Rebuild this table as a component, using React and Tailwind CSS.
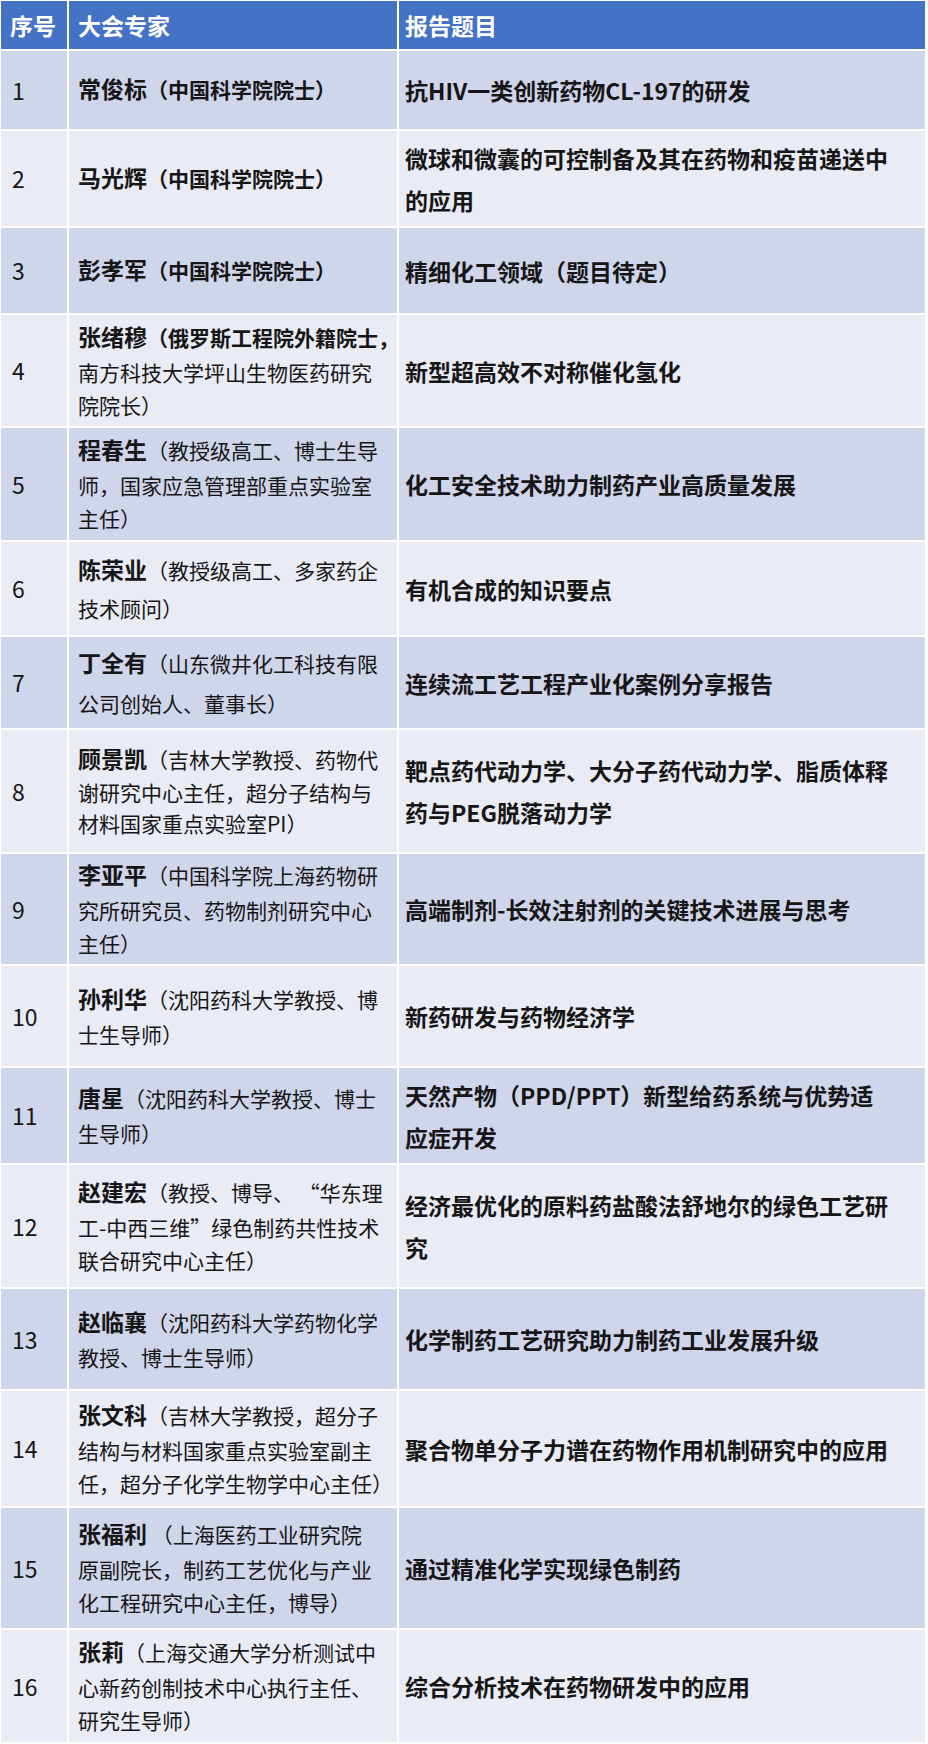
import React from "react";

const rows = [
  { n: "1", h: "h-[78px]", name: "常俊标", first: "（中国科学院院士）", firstBold: true, more: [], title: ["抗HIV一类创新药物CL-197的研发"] },
  { n: "2", h: "h-[95px]", name: "马光辉", first: "（中国科学院院士）", firstBold: true, more: [], title: ["微球和微囊的可控制备及其在药物和疫苗递送中", "的应用"] },
  { n: "3", h: "h-[85px]", name: "彭孝军", first: "（中国科学院院士）", firstBold: true, more: [], title: ["精细化工领域（题目待定）"] },
  { n: "4", h: "h-[111px]", name: "张绪穆", first: "（俄罗斯工程院外籍院士，", firstBold: true, more: ["南方科技大学坪山生物医药研究", "院院长）"], title: ["新型超高效不对称催化氢化"] },
  { n: "5", h: "h-[112px]", name: "程春生", first: "（教授级高工、博士生导", more: ["师，国家应急管理部重点实验室", "主任）"], title: ["化工安全技术助力制药产业高质量发展"] },
  { n: "6", h: "h-[93px]", lead: "leading-[36px]", name: "陈荣业", first: "（教授级高工、多家药企", more: ["技术顾问）"], title: ["有机合成的知识要点"] },
  { n: "7", h: "h-[91px]", lead: "leading-[38px]", name: "丁全有", first: "（山东微井化工科技有限", more: ["公司创始人、董事长）"], title: ["连续流工艺工程产业化案例分享报告"] },
  { n: "8", h: "h-[122px]", lead: "leading-[31px]", name: "顾景凯", first: "（吉林大学教授、药物代", more: ["谢研究中心主任，超分子结构与", "材料国家重点实验室PI）"], title: ["靶点药代动力学、大分子药代动力学、脂质体释", "药与PEG脱落动力学"] },
  { n: "9", h: "h-[110px]", name: "李亚平", first: "（中国科学院上海药物研", more: ["究所研究员、药物制剂研究中心", "主任）"], title: ["高端制剂-长效注射剂的关键技术进展与思考"] },
  { n: "10", h: "h-[100px]", name: "孙利华", first: "（沈阳药科大学教授、博", more: ["士生导师）"], title: ["新药研发与药物经济学"] },
  { n: "11", h: "h-[95px]", name: "唐星", first: "（沈阳药科大学教授、博士", more: ["生导师）"], title: ["天然产物（PPD/PPT）新型给药系统与优势适", "应症开发"] },
  { n: "12", h: "h-[122px]", name: "赵建宏", first: "（教授、博导、 “华东理", more: ["工-中西三维”绿色制药共性技术", "联合研究中心主任）"], title: ["经济最优化的原料药盐酸法舒地尔的绿色工艺研", "究"] },
  { n: "13", h: "h-[100px]", name: "赵临襄", first: "（沈阳药科大学药物化学", more: ["教授、博士生导师）"], title: ["化学制药工艺研究助力制药工业发展升级"] },
  { n: "14", h: "h-[115px]", name: "张文科", first: "（吉林大学教授，超分子", more: ["结构与材料国家重点实验室副主", "任，超分子化学生物学中心主任）"], title: ["聚合物单分子力谱在药物作用机制研究中的应用"] },
  { n: "15", h: "h-[120px]", name: "张福利", first: " （上海医药工业研究院", more: ["原副院长，制药工艺优化与产业", "化工程研究中心主任，博导）"], title: ["通过精准化学实现绿色制药"] },
  { n: "16", h: "h-[112px]", name: "张莉", first: "（上海交通大学分析测试中", more: ["心新药创制技术中心执行主任、", "研究生导师）"], title: ["综合分析技术在药物研发中的应用"] },
];

function Row({ row, dark }) {
  const bg = dark ? "bg-[#cfd5ea]" : "bg-[#e9ebf5]";
  return (
    <>
      <div className={`${row.h} ${bg} flex items-center pl-[11px] text-[23px]`}>{row.n}</div>
      <div className={`${row.h} ${bg} flex flex-col justify-center pl-[9px] ${row.lead || "leading-[33px]"}`}>
        <div className="whitespace-pre">
          <span className="text-[23px] font-bold">{row.name}</span>
          <span className={`text-[21px] ${row.firstBold ? "font-bold" : "font-normal"}`}>{row.first}</span>
        </div>
        {row.more.map((line) => (
          <div key={line} className="whitespace-pre text-[21px]">
            {line}
          </div>
        ))}
      </div>
      <div className={`${row.h} ${bg} flex flex-col justify-center pl-[6px] text-[23px] font-bold leading-[42px]`}>
        {row.title.map((line) => (
          <div key={line} className="whitespace-pre">
            {line}
          </div>
        ))}
      </div>
    </>
  );
}

export default function App() {
  return (
    <div
      className="w-[928px] h-[1744px] bg-white pt-[1px] pl-[1px] pr-[3px] text-[#161616]"
      style={{ fontFamily: '"Noto Sans CJK SC", "Noto Sans", sans-serif' }}
    >
      <div className="grid grid-cols-[66px_328px_1fr] gap-[2px]">
        {/* header */}
        <div className="h-[48px] bg-[#4472c4] flex items-center pl-[9px] text-[23px] font-bold text-white">序号</div>
        <div className="h-[48px] bg-[#4472c4] flex items-center pl-[9px] text-[23px] font-bold text-white">大会专家</div>
        <div className="h-[48px] bg-[#4472c4] flex items-center pl-[6px] text-[23px] font-bold text-white">报告题目</div>

        {rows.map((row, i) => (
          <Row key={row.n} row={row} dark={i % 2 === 0} />
        ))}
      </div>
    </div>
  );
}
